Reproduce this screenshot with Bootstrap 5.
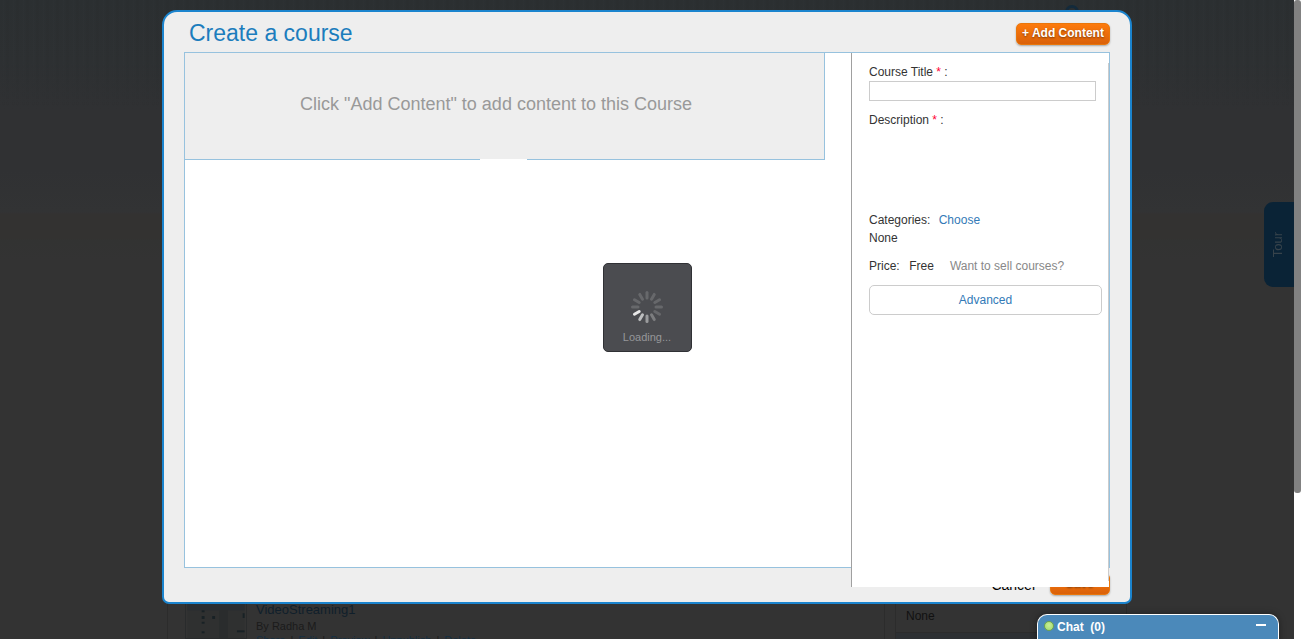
<!DOCTYPE html>
<html lang="en">
<head>
<meta charset="utf-8">
<meta name="viewport" content="width=device-width, initial-scale=1">
<title>Create a course</title>
<link rel="stylesheet" href="https://cdn.jsdelivr.net/npm/bootstrap@5.3.0/dist/css/bootstrap.min.css">
<style>
  body { height: 639px; overflow: hidden; background: #fff; color: #333; font: 12px/18px "Liberation Sans", Arial, sans-serif; }
  a { text-decoration: none; }
  .page { width: 1294px; height: 639px; background: linear-gradient(#2b2f31, #2d3032 60px, #303133 110px, #303133 170px, #323334 212px, #333231 214px, #333231 239px, #323332 240px, #333 260px, #333); }
  .streaks { height: 172px; background: repeating-linear-gradient(90deg, transparent 0 2px, #34373933 3px 4px, transparent 5px 6px, #292d2f44 7px 8px, transparent 9px 10px); -webkit-mask-image: linear-gradient(#000 60px, transparent 106px); mask-image: linear-gradient(#000 60px, transparent 106px); }
  .knob { left: 1065px; top: 5px; width: 14px; height: 14px; border: 3px solid #132a3b; }
  .backpage { left: 167px; top: 596px; width: 960px; height: 43px; }
  .course-row { width: 718px; border: 1px solid #2c2c2c; border-width: 0 1px; padding: 0 0 0 17px; color: #1b1b1b; }
  .thumb { width: 62px; height: 43px; margin-right: 9px; border: 1px solid #292b2c; }
  .course-name { font-size: 13px; line-height: 16px; padding-top: 6px; color: #101f2b; }
  .course-by { font-size: 11px; line-height: 15px; padding-top: 1px; }
  .course-links { font-size: 11px; line-height: 13px; white-space: nowrap; color: #1b1b1b; word-spacing: 2px; }
  .course-links a { color: #152f42; }
  .side-box { width: 232px; margin-left: 10px; border: 1px solid #2c2c2c; border-width: 0 1px; color: #111; }
  .side-box .none { height: 37px; padding: 11px 0 0 10px; border-bottom: 1px solid #2c2c2c; }
  .side-foot { height: 6px; background: #2d3033; }
  .tour { left: 1264px; top: 202px; width: 30px; height: 85px; background: #0a2336; border-radius: 9px 0 0 9px; color: #37434b; font-size: 13px; }
  .tour span { writing-mode: vertical-rl; transform: rotate(180deg); margin-right: 3px; }
  .scroller { width: 7px; height: 639px; background: #fff; }
  .scroller div { height: 493px; background: #818181; border-radius: 3px; }
  .dialog { left: 162px; top: 10px; width: 970px; height: 594px; border: 2px solid #1b84ce; border-radius: 15px 15px 7px 7px; background: #eee; padding: 0 20px; }
  .dialog-head { height: 40px; padding-left: 5px; }
  .dialog-head h1 { font-size: 23px; line-height: 40px; color: #1c7dbd; font-weight: 400; padding-top: 1px; }
  .btn-orange { font-size: 12px; line-height: 18px; font-weight: 700; color: #fff; text-shadow: 0 1px 2px rgba(0,0,0,.45); border: 1px solid #e9760b; border-radius: 5px; background: linear-gradient(#fd7a0c, #da610a); box-shadow: 0 1px 2px rgba(0,0,0,.3); padding: 0 0 2px; height: 22px; }
  .add-btn { width: 94px; margin-top: 4px; }
  .workspace { height: 516px; background: #fff; border: 1px solid #97c2de; }
  .drop-zone { width: 640px; height: 107px; background: #eee; border: 1px solid #97c2de; border-width: 0 1px 1px 0; color: #999; font-size: 18px; padding-right: 17px; padding-bottom: 4px; }
  .drop-gap { left: 480px; top: 159px; width: 47px; height: 1px; background: #fff; }
  .form-side { width: 258px; height: 534px; background: #fff; border-left: 1px solid #a0a0a0; padding: 10px 7px 0 17px; z-index: 2; }
  .form-side::after { content: ""; position: absolute; right: 0; top: 10px; height: 518px; width: 1px; background: #ccc; }
  .form-side a { color: #337ab7; }
  .form-side .req { color: #f03; }
  .title-input { width: 227px; height: 20px; border: 1px solid #ccc; border-radius: 0; padding: 0 4px; font-size: 12px; }
  .desc { height: 100px; margin-top: 10px; }
  .choose { margin-left: 5px; }
  .price { margin-top: 10px; }
  .free { margin-left: 9.5px; }
  .sell { margin-left: 16px; color: #888; }
  .adv { height: 30px; margin-top: 10px; border: 1px solid #ccc; border-radius: 5px; line-height: 28px; font-size: 12px; }
  .dialog-foot { padding-top: 5px; }
  .cancel { font-size: 14px; line-height: 22px; color: #000; margin-right: 15px; padding-top: 1px; }
  .save-btn { width: 60px; color: #b55110; padding-bottom: 4px; }
  .loading { left: 603px; top: 263px; width: 89px; height: 89px; background: #4b4c50; border: 1px solid #303135; border-radius: 5px; color: #96979a; font-size: 11px; z-index: 5; padding: 26px 1px 0 0; }
  .loading span { line-height: 14px; margin-top: 6px; }
  .chat { left: 1037px; top: 614px; width: 242px; height: 30px; border: 1px solid #fff; border-width: 1px 1px 0; border-radius: 10px 10px 0 0; background: #4b89ba; color: #fff; font-weight: 700; z-index: 6; padding: 3px 12px 0 6px; box-shadow: 0 0 7px rgba(0,0,0,.4); }
  .online { width: 10px; height: 10px; margin: 3px 3px 0 0; border: 1px solid #6fa44c; background: radial-gradient(circle at 50% 40%, #c7ef93, #a1d971); }
  .minimize { width: 10px; height: 2px; background: #fff; margin-top: 6px; }
</style>
</head>
<body class="position-relative">
<div class="d-flex">
  <main class="page">
    <div class="streaks"></div>
    <div class="knob position-absolute rounded-circle"></div>
    <div class="backpage position-absolute d-flex overflow-hidden">
      <div class="course-row d-flex flex-shrink-0">
        <svg class="thumb flex-shrink-0" viewBox="0 0 60 43">
          <rect width="60" height="43" fill="#2f3030"/><rect width="60" height="14" fill="#292d31"/>
          <path d="M38 14v29" stroke="#2a2c2d" stroke-width="9"/>
          <g fill="#182125"><rect x="15" y="14" width="3" height="2"/><rect x="15" y="20" width="3" height="3"/><rect x="26" y="20" width="3" height="3"/><rect x="15" y="26" width="3" height="2"/><rect x="58" y="17" width="2" height="5"/><rect x="52" y="35" width="8" height="2"/><rect x="15" y="36" width="3" height="2"/></g>
        </svg>
        <div>
          <div class="course-name">VideoStreaming1</div>
          <div class="course-by">By Radha M</div>
          <div class="course-links"><a href="#">Share</a> | <a href="#">Edit</a> | <a href="#">Preview</a> | <a href="#">Unpublish</a> | <a href="#">Delete</a></div>
        </div>
      </div>
      <div class="side-box flex-shrink-0"><div class="none">None</div><div class="side-foot"></div></div>
    </div>
    <div class="tour position-absolute d-flex align-items-center justify-content-center"><span>Tour</span></div>
  </main>
  <div class="scroller"><div></div></div>
</div>

<section class="dialog position-absolute d-flex flex-column">
  <header class="dialog-head d-flex justify-content-between align-items-center flex-shrink-0">
    <h1 class="m-0">Create a course</h1>
    <button class="btn btn-orange add-btn">+ Add Content</button>
  </header>
  <div class="workspace d-flex justify-content-between flex-shrink-0">
    <div class="drop-zone d-flex align-items-center justify-content-center">Click "Add Content" to add content to this Course</div>
    <form class="form-side position-relative flex-shrink-0">
      <label class="d-block" for="title">Course Title <span class="req">*</span> :</label>
      <input id="title" class="form-control title-input">
      <div class="desc">Description <span class="req">*</span> :</div>
      <div>Categories: <a class="choose" href="#">Choose</a></div>
      <div>None</div>
      <div class="price d-flex"><span>Price:</span><span class="free">Free</span><span class="sell text-nowrap">Want to sell courses?</span></div>
      <a class="adv btn w-100 p-0" href="#">Advanced</a>
    </form>
  </div>
  <footer class="dialog-foot d-flex justify-content-end">
    <span class="cancel">Cancel</span>
    <button type="button" class="btn btn-orange save-btn">Save</button>
  </footer>
</section>
<div class="drop-gap position-absolute"></div>

<div class="loading position-absolute d-flex flex-column align-items-center">
  <svg class="flex-shrink-0" width="34" height="34" viewBox="-17 -17 34 34" stroke-width="3" stroke-linecap="round">
    <g stroke="#67686b">
      <path d="M0-9v-5.5"/><path d="M0-9v-5.5" transform="rotate(30)"/><path d="M0-9v-5.5" transform="rotate(60)"/><path d="M0-9v-5.5" transform="rotate(90)"/><path d="M0-9v-5.5" transform="rotate(120)"/>
      <path d="M0-9v-5.5" transform="rotate(270)"/><path d="M0-9v-5.5" transform="rotate(300)"/><path d="M0-9v-5.5" transform="rotate(330)"/>
    </g>
    <path d="M0-9v-5.5" transform="rotate(150)" stroke="#7c7d7f"/><path d="M0-9v-5.5" transform="rotate(180)" stroke="#9b9c9e"/><path d="M0-9v-5.5" transform="rotate(210)" stroke="#bdbebf"/><path d="M0-9v-5.5" transform="rotate(240)" stroke="#e8e8e8"/>
  </svg>
  <span>Loading...</span>
</div>

<div class="chat position-absolute d-flex">
  <span class="online rounded-circle"></span><span>Chat&nbsp; (0)</span><span class="minimize ms-auto"></span>
</div>
<script src="https://cdn.jsdelivr.net/npm/bootstrap@5.3.0/dist/js/bootstrap.bundle.min.js"></script>
</body>
</html>
